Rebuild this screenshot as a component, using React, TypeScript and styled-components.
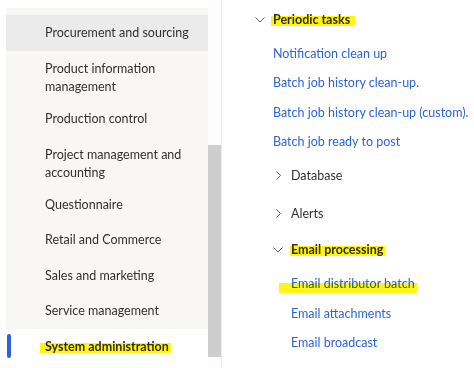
import React from "react";
import styled, { createGlobalStyle } from "styled-components";

const GlobalStyle = createGlobalStyle`
  html, body {
    margin: 0;
    padding: 0;
    background: #ffffff;
  }
  body {
    font-family: Lato, "Open Sans", sans-serif;
    font-size: 12.5px;
    color: #323130;
  }
`;

const modules = [
  { label: "Procurement and sourcing", hover: true },
  { label: "Product information management", wrap: true },
  { label: "Production control" },
  { label: "Project management and accounting", wrap: true },
  { label: "Questionnaire" },
  { label: "Retail and Commerce" },
  { label: "Sales and marketing" },
  { label: "Service management" },
];

const Chevron: React.FC<{ dir: "down" | "right" }> = ({ dir }) =>
  dir === "down" ? (
    <svg width="10" height="6" viewBox="0 0 10 6">
      <polyline points="0.5,0.5 5,5 9.5,0.5" fill="none" stroke="#605e5c" strokeWidth="1" />
    </svg>
  ) : (
    <svg width="5" height="9" viewBox="0 0 5 9">
      <polyline points="0.5,0.5 4.5,4.5 0.5,8.5" fill="none" stroke="#605e5c" strokeWidth="1" />
    </svg>
  );

const App: React.FC = () => {
  return (
    <Page>
      <GlobalStyle />
      <Nav>
        <NavList>
          {modules.map((m) => (
            <NavItem key={m.label} $wrap={m.wrap} $hover={m.hover}>
              {m.label}
            </NavItem>
          ))}
          <NavItem $selected>
            <Mark $left={-5} $right={-2} $top={0} $height={10}>
              System administration
            </Mark>
          </NavItem>
        </NavList>
        <ScrollTrack>
          <ScrollThumb />
        </ScrollTrack>
      </Nav>

      <Tree>
        <Row>
          <Chevron dir="down" />
          <Heading>
            <Mark $left={-2} $right={-5} $top={0} $height={10}>
              Periodic tasks
            </Mark>
          </Heading>
        </Row>
        <Row $indent={18} $mt={4}>
          <Link>Notification clean up</Link>
        </Row>
        <Row $indent={18}>
          <Link>Batch job history clean-up.</Link>
        </Row>
        <Row $indent={18}>
          <Link>Batch job history clean-up (custom).</Link>
        </Row>
        <Row $indent={18}>
          <Link>Batch job ready to post</Link>
        </Row>
        <Row $indent={21} $mt={4.5}>
          <Chevron dir="right" />
          <Folder $gap={10}>Database</Folder>
        </Row>
        <Row $indent={21} $mt={9.5}>
          <Chevron dir="right" />
          <Folder $gap={10}>Alerts</Folder>
        </Row>
        <Row $indent={18} $mt={7}>
          <Chevron dir="down" />
          <Heading>
            <Mark $left={-1} $right={-2} $top={0} $height={10}>
              Email processing
            </Mark>
          </Heading>
        </Row>
        <Row $indent={36} $mt={4.5}>
          <Link>
            <Mark $left={-12} $right={-2} $top={3} $height={10}>
              Email distributor batch
            </Mark>
          </Link>
        </Row>
        <Row $indent={36}>
          <Link>Email attachments</Link>
        </Row>
        <Row $indent={36}>
          <Link>Email broadcast</Link>
        </Row>
      </Tree>
    </Page>
  );
};

const Page = styled.div`
  display: flex;
  width: 474px;
  height: 368px;
  overflow: hidden;
`;

const Nav = styled.nav`
  display: flex;
  flex-shrink: 0;
  width: 222px;
  height: 368px;
`;

const NavList = styled.ul`
  list-style: none;
  align-self: flex-start;
  width: 202px;
  margin: 8px 0 0 6px;
  padding: 7px 0 0;
  background: #f8f7f6;
`;

const NavItem = styled.li<{ $wrap?: boolean; $hover?: boolean; $selected?: boolean }>`
  position: relative;
  padding: ${({ $wrap }) => ($wrap ? "9px 8px 5.5px 39px" : "8.75px 8px 8.75px 39px")};
  line-height: 18px;
  white-space: ${({ $wrap }) => ($wrap ? "normal" : "nowrap")};
  font-weight: ${({ $selected }) => ($selected ? 700 : 400)};
  background: ${({ $hover, $selected }) => ($hover ? "#ebebeb" : $selected ? "#ffffff" : "transparent")};

  &::before {
    content: "";
    display: ${({ $selected }) => ($selected ? "block" : "none")};
    position: absolute;
    left: 1px;
    top: 5px;
    width: 4px;
    height: 24px;
    border-radius: 3px;
    background: #2b62e3;
  }
`;

const ScrollTrack = styled.div`
  display: flex;
  flex-direction: column;
  width: 13px;
  height: 368px;
  border-right: 1px solid #ececec;
  background: #fdfdfd;
`;

const ScrollThumb = styled.div`
  margin-top: 145px;
  height: 212px;
  background: #cdcdcd;
`;

const Tree = styled.div`
  display: flex;
  flex-direction: column;
  flex: 1;
  padding: 5.5px 0 0 33px;
`;

const Row = styled.div<{ $indent?: number; $mt?: number }>`
  display: flex;
  align-items: center;
  height: 29.3px;
  margin-top: ${({ $mt }) => $mt ?? 0}px;
  padding-left: ${({ $indent }) => $indent ?? 0}px;
  white-space: nowrap;
`;

const Heading = styled.span`
  margin-left: 8px;
  font-weight: 700;
  color: #323130;
`;

const Folder = styled.span<{ $gap: number }>`
  margin-left: ${({ $gap }) => $gap}px;
  color: #323130;
`;

const Link = styled.span`
  color: #2c66d6;
`;

const Mark = styled.span<{ $left: number; $right: number; $top: number; $height: number }>`
  position: relative;
  display: inline-block;
  line-height: 18px;

  &::after {
    content: "";
    position: absolute;
    left: ${({ $left }) => $left}px;
    right: ${({ $right }) => $right}px;
    top: calc(50% - 4px + ${({ $top }) => $top}px);
    height: ${({ $height }) => $height}px;
    background: #fff31a;
    mix-blend-mode: multiply;
    pointer-events: none;
  }
`;

export default App;
